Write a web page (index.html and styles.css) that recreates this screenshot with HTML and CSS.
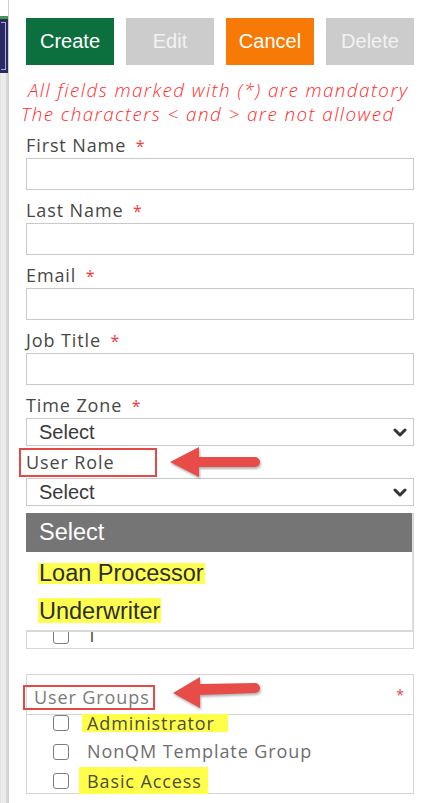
FILE: index.html
```html
<!DOCTYPE html>
<html>
<head>
<meta charset="utf-8">
<link rel="stylesheet" href="styles.css">
</head>
<body>
<div class="page">
  <aside class="rail">
    <div class="rail-top"></div>
    <div class="rail-green"></div>
    <div class="rail-nav"><div class="rail-nav-inner"></div></div>
    <div class="rail-rest"></div>
  </aside>
  <main class="form">
    <div class="actions">
      <button class="btn btn-create">Create</button>
      <button class="btn btn-off">Edit</button>
      <button class="btn btn-cancel">Cancel</button>
      <button class="btn btn-off">Delete</button>
    </div>
    <div class="notice">
      <p class="notice-l1">All fields marked with (*) are mandatory</p>
      <p class="notice-l2">The characters &lt; and &gt; are not allowed</p>
    </div>
    <div class="field">
      <label class="label">First Name <span class="req">*</span></label>
      <div class="input"></div>
    </div>
    <div class="field">
      <label class="label">Last Name <span class="req">*</span></label>
      <div class="input"></div>
    </div>
    <div class="field">
      <label class="label">Email <span class="req">*</span></label>
      <div class="input"></div>
    </div>
    <div class="field">
      <label class="label">Job Title <span class="req">*</span></label>
      <div class="input"></div>
    </div>
    <div class="field">
      <label class="label">Time Zone <span class="req">*</span></label>
      <div class="select">
        <span>Select</span>
        <svg class="chev" width="14" height="9" viewBox="0 0 14 9"><polyline points="2,2 7,7 12,2" fill="none" stroke="#333" stroke-width="3" stroke-linecap="round" stroke-linejoin="round"/></svg>
      </div>
    </div>
    <div class="label-boxed role-label">User Role</div>
    <div class="select select-role">
      <span>Select</span>
      <svg class="chev" width="14" height="9" viewBox="0 0 14 9"><polyline points="2,2 7,7 12,2" fill="none" stroke="#333" stroke-width="3" stroke-linecap="round" stroke-linejoin="round"/></svg>
    </div>
    <div class="role-list">
      <div class="check-row"><span class="box"></span><span class="check-text">T</span></div>
      <div class="dropdown">
        <div class="dd-head">Select</div>
        <div class="dd-item"><span class="hl">Loan Processor</span></div>
        <div class="dd-item dd-item2"><span class="hl hl-tall">Underwriter</span></div>
      </div>
    </div>
    <div class="groups">
      <div class="groups-head">
        <span class="groups-title">User Groups</span>
        <span class="req small">*</span>
      </div>
      <div class="groups-body">
        <div class="check-row"><span class="box"></span><span class="check-text hl-y hl-admin">Administrator</span></div>
        <div class="check-row"><span class="box"></span><span class="check-text muted">NonQM Template Group</span></div>
        <div class="check-row"><span class="box"></span><span class="check-text hl-y hl-basic">Basic Access</span></div>
      </div>
    </div>
  </main>
  <svg class="arrow arrow-1" width="100" height="40" viewBox="0 0 100 40"><path d="M4,18 L33,3 L33,13 L89,13 A5,5 0 0 1 89,23 L33,23 L33,33 Z" fill="#e84c48"/></svg>
  <svg class="arrow arrow-2" width="100" height="40" viewBox="0 0 100 40"><path d="M4,19 L31,3 L31,10 L86,9 A5,5 0 0 1 86,19 L31,21 L31,34 Z" fill="#e84c48"/></svg>
</div>
</body>
</html>
```
FILE: styles.css
```css
* { box-sizing: border-box; }
html, body { margin: 0; padding: 0; background: #fff; }
.page {
  position: relative;
  display: flex;
  width: 434px;
  height: 803px;
  overflow: hidden;
}
.rail {
  width: 9px;
  flex: none;
  display: flex;
  flex-direction: column;
  border-right: 1px solid #cfcfcf;
  background: #e7e7e7;
}
.rail-top { height: 16px; background: #fff; }
.rail-green { height: 3px; background: #3f9a4a; }
.rail-nav { height: 54px; background: #2c2866; padding: 3px 2px 3px 1px; }
.rail-nav-inner { height: 100%; border: 1px solid #a9a6d0; border-left: none; }
.rail-rest {
  flex: 1;
  background: linear-gradient(to right, #e2e2e2 0, #e2e2e2 1px, #ececec 1px, #ececec 6px, #d8d8d8 6px);
}
.form {
  width: 388px;
  margin-left: 17px;
  padding-top: 18px;
  display: flex;
  flex-direction: column;
  font-family: "Open Sans", "Liberation Sans", sans-serif;
}
.actions { display: flex; gap: 12px; }
.btn {
  width: 88px;
  height: 47px;
  border: none;
  padding: 0;
  font-family: "Liberation Sans", Arial, sans-serif;
  font-size: 20px;
  color: #fff;
}
.btn-create { background: #0c6f3e; }
.btn-cancel { background: #f67a05; }
.btn-off { background: #cccccc; color: #f2f2f2; }
.notice {
  margin: 13px 0 -1px -5px;
  color: #ff2b2b;
  font-family: "Open Sans", sans-serif;
  font-style: italic;
  font-weight: 300;
  font-size: 18.8px;
  line-height: 24px;
  letter-spacing: 1.45px;
}
.notice p { margin: 0; white-space: nowrap; }
.notice-l1 { padding-left: 7px; }
.field { display: flex; flex-direction: column; }
.label {
  display: block;
  padding-top: 7px;
  height: 33px;
  line-height: 26px;
  font-size: 18px;
  letter-spacing: 0.9px;
  color: #474747;
}
.req { color: #f23a3a; margin-left: 4px; font-size: 16px; }
.req.small { font-size: 14px; margin-right: 9px; }
.input {
  height: 32px;
  border: 1px solid #c9c9c9;
}
.select {
  height: 28px;
  border: 1px solid #c9c9c9;
  display: flex;
  align-items: center;
  justify-content: space-between;
  padding: 0 6px 0 12px;
  font-family: "Liberation Sans", Arial, sans-serif;
  font-size: 20px;
  color: #3a3a3a;
}
.label-boxed {
  margin: 2px 0 0 -7px;
  width: 138px;
  height: 29px;
  border: 2px solid #e34a47;
  padding-left: 5px;
  line-height: 25px;
  font-size: 18px;
  letter-spacing: 0.9px;
  color: #474747;
}
.select-role { margin-top: 1px; }
.role-list {
  position: relative;
  margin-top: 7px;
  height: 136px;
  border: 1px solid #d6d6d6;
  padding-top: 107px;
}
.dropdown {
  position: absolute;
  top: -1px;
  left: -1px;
  right: 0;
  height: 119px;
  background: #fff;
  border-bottom: 2px solid #d9d9d9;
  border-right: 1px solid #e0e0e0;
  font-family: "Liberation Sans", Arial, sans-serif;
  font-size: 23.5px;
}
.dd-head {
  height: 39px;
  background: #757575;
  color: #fff;
  padding-left: 13px;
  line-height: 39px;
}
.dd-item {
  height: 38px;
  padding: 8px 0 0 12px;
  color: #2e2e2e;
}
.hl {
  display: inline-block;
  background: #ffff52;
  height: 21px;
  line-height: 20px;
  padding: 0 1px;
}
.hl-tall { height: 25px; line-height: 27px; }
.check-row {
  display: flex;
  align-items: center;
  height: 29px;
  padding-left: 26px;
}
.box {
  width: 16px;
  height: 16px;
  border: 1.5px solid #7d7d7d;
  border-radius: 3px;
  flex: none;
}
.check-text {
  margin-left: 18px;
  font-size: 18px;
  letter-spacing: 0.9px;
  line-height: 29px;
  color: #4d4d3a;
}
.muted { color: #6e6e6e; }
.hl-y { background: #ffff4a; line-height: 18px; }
.hl-admin { padding: 0 13px 0 5px; margin-left: 13px; height: 18px; display: inline-flex; align-items: center; }
.hl-basic { padding: 0 6px 0 8px; margin-left: 10px; height: 27px; display: inline-flex; align-items: center; }
.groups {
  margin-top: 25px;
  height: 120px;
  border: 1px solid #d6d6d6;
}
.groups-head {
  height: 40px;
  border-bottom: 1px solid #d6d6d6;
  display: flex;
  align-items: center;
  justify-content: space-between;
}
.groups-title {
  margin-left: -4px;
  margin-top: 6px;
  width: 132px;
  height: 25px;
  border: 2px solid #e34a47;
  padding-left: 9px;
  line-height: 20px;
  font-size: 18px;
  letter-spacing: 0.9px;
  color: #7a7a7a;
}
.groups-body { margin-top: -7px; }
.groups-body .check-row { height: 29px; }
.arrow {
  position: absolute;
  filter: drop-shadow(1px 2px 1px rgba(0,0,0,0.3));
}
.arrow-1 { left: 166px; top: 444px; }
.arrow-2 { left: 169px; top: 674px; }
```
